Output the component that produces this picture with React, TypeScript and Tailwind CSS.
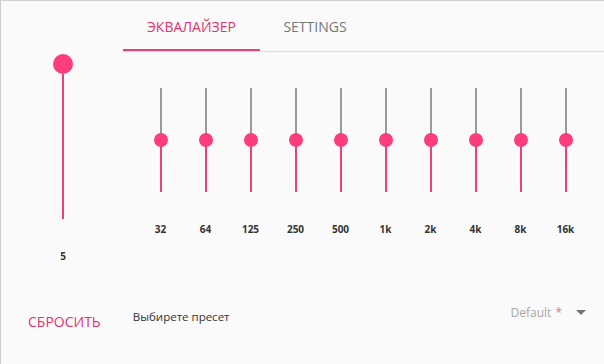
import React from 'react';

const bands = ['32', '64', '125', '250', '500', '1k', '2k', '4k', '8k', '16k'];

const BandSlider: React.FC<{ label: string }> = ({ label }) => (
    <div className="flex flex-col items-center">
        <div className="relative flex h-[104px] w-[14px] flex-col items-center">
            <div className="h-[52px] w-[2px] bg-[#9a9a9a]" />
            <div className="h-[52px] w-[2px] bg-[#ee3f7b]" />
            <div className="absolute left-0 top-[45px] h-[14px] w-[14px] rounded-full bg-[#fb3d7e]" />
        </div>
        <span className="mt-[30px] text-[10px] font-bold leading-[14px] text-[#333]">{label}</span>
    </div>
);

const App: React.FC = () => {
    return (
        <div
            className="flex h-[364px] w-[604px] flex-col overflow-hidden border-l border-t border-[#cfcfcf] bg-[#fafafa]"
            style={{ fontFamily: '"Open Sans", "Noto Sans", sans-serif' }}
        >
            <div className="flex h-[299px]">
                {/* master volume */}
                <div className="flex w-[122px] flex-col items-center pl-[2px] pt-[53px]">
                    <div className="h-[20px] w-[20px] rounded-full bg-[#fb3d7e]" />
                    <div className="h-[145px] w-[2px] bg-[#ee3f7b]" />
                    <span className="mt-[30px] text-[10px] font-bold leading-[14px] text-[#333]">5</span>
                </div>

                <div className="flex flex-1 flex-col">
                    <div className="flex h-[51px] border-b border-[#dedede]">
                        <div className="flex w-[137px] flex-col">
                            <div className="flex flex-1 items-center justify-center pt-[2px] text-[14px] font-medium text-[#e2346f]">
                                ЭКВАЛАЙЗЕР
                            </div>
                            <div className="h-[2px] bg-[#e24679]" />
                        </div>
                        <div className="flex w-[110px] items-center justify-center text-[14px] font-medium text-[#777]">
                            SETTINGS
                        </div>
                    </div>

                    <div className="ml-[15px] mt-[36px] grid w-[450px] grid-cols-10">
                        {bands.map((b) => (
                            <BandSlider key={b} label={b} />
                        ))}
                    </div>
                </div>
            </div>

            <div className="flex items-start">
                <button className="ml-[27px] mt-[12px] text-[14px] font-medium leading-[20px] text-[#e2346f]">
                    СБРОСИТЬ
                </button>
                <span className="ml-[32px] mt-[9px] text-[11.5px] leading-[16px] text-[#333]">Выбирете пресет</span>
                <div className="ml-auto mr-[18px] mt-[5px] flex items-center">
                    <span className="text-[12px] leading-[16px] text-[#a8a8a8]">
                        Default<span className="ml-[4px] text-[#e57373]">*</span>
                    </span>
                    <svg className="ml-[14px]" width="10" height="6" viewBox="0 0 10 6">
                        <path d="M0 0 L10 0 L5 5 Z" fill="#757575" />
                    </svg>
                </div>
            </div>
        </div>
    );
};

export default App;
